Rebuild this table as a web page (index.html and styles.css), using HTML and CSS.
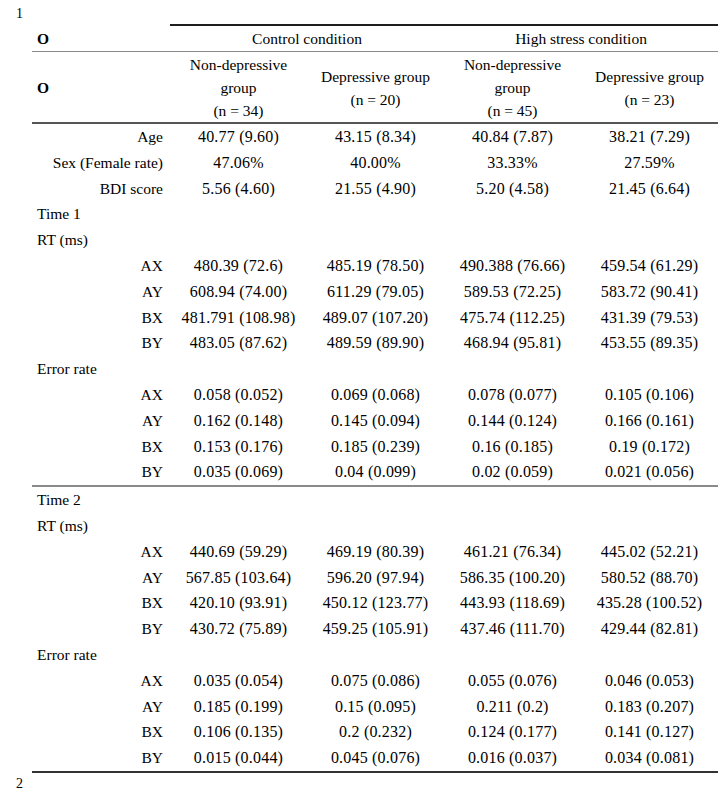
FILE: index.html
```html
<!DOCTYPE html>
<html>
<head>
<meta charset="utf-8">
<link rel="stylesheet" href="styles.css">
</head>
<body>
<div class="page">
  <div class="pnum top">1</div>
  <table class="tbl">
    <colgroup>
      <col class="c-label">
      <col class="c-data">
      <col class="c-data">
      <col class="c-data">
      <col class="c-data">
    </colgroup>
    <thead>
      <tr class="h1">
        <th class="lab bold">O</th>
        <th colspan="2" class="span">Control condition</th>
        <th colspan="2" class="span">High stress condition</th>
      </tr>
      <tr class="h2">
        <th class="lab bold">O</th>
        <th>Non-depressive<br>group<br>(n = 34)</th>
        <th>Depressive group<br>(n = 20)</th>
        <th>Non-depressive<br>group<br>(n = 45)</th>
        <th>Depressive group<br>(n = 23)</th>
      </tr>
    </thead>
    <tbody>
      <tr><td class="r">Age</td><td>40.77 (9.60)</td><td>43.15 (8.34)</td><td>40.84 (7.87)</td><td>38.21 (7.29)</td></tr>
      <tr><td class="r">Sex (Female rate)</td><td>47.06%</td><td>40.00%</td><td>33.33%</td><td>27.59%</td></tr>
      <tr><td class="r">BDI score</td><td>5.56 (4.60)</td><td>21.55 (4.90)</td><td>5.20 (4.58)</td><td>21.45 (6.64)</td></tr>
      <tr><td class="l">Time 1</td><td></td><td></td><td></td><td></td></tr>
      <tr><td class="l">RT (ms)</td><td></td><td></td><td></td><td></td></tr>
      <tr><td class="r">AX</td><td>480.39 (72.6)</td><td>485.19 (78.50)</td><td>490.388 (76.66)</td><td>459.54 (61.29)</td></tr>
      <tr><td class="r">AY</td><td>608.94 (74.00)</td><td>611.29 (79.05)</td><td>589.53 (72.25)</td><td>583.72 (90.41)</td></tr>
      <tr><td class="r">BX</td><td>481.791 (108.98)</td><td>489.07 (107.20)</td><td>475.74 (112.25)</td><td>431.39 (79.53)</td></tr>
      <tr><td class="r">BY</td><td>483.05 (87.62)</td><td>489.59 (89.90)</td><td>468.94 (95.81)</td><td>453.55 (89.35)</td></tr>
      <tr><td class="l">Error rate</td><td></td><td></td><td></td><td></td></tr>
      <tr><td class="r">AX</td><td>0.058 (0.052)</td><td>0.069 (0.068)</td><td>0.078 (0.077)</td><td>0.105 (0.106)</td></tr>
      <tr><td class="r">AY</td><td>0.162 (0.148)</td><td>0.145 (0.094)</td><td>0.144 (0.124)</td><td>0.166 (0.161)</td></tr>
      <tr><td class="r">BX</td><td>0.153 (0.176)</td><td>0.185 (0.239)</td><td>0.16 (0.185)</td><td>0.19 (0.172)</td></tr>
      <tr class="sep"><td class="r">BY</td><td>0.035 (0.069)</td><td>0.04 (0.099)</td><td>0.02 (0.059)</td><td>0.021 (0.056)</td></tr>
      <tr><td class="l">Time 2</td><td></td><td></td><td></td><td></td></tr>
      <tr><td class="l">RT (ms)</td><td></td><td></td><td></td><td></td></tr>
      <tr><td class="r">AX</td><td>440.69 (59.29)</td><td>469.19 (80.39)</td><td>461.21 (76.34)</td><td>445.02 (52.21)</td></tr>
      <tr><td class="r">AY</td><td>567.85 (103.64)</td><td>596.20 (97.94)</td><td>586.35 (100.20)</td><td>580.52 (88.70)</td></tr>
      <tr><td class="r">BX</td><td>420.10 (93.91)</td><td>450.12 (123.77)</td><td>443.93 (118.69)</td><td>435.28 (100.52)</td></tr>
      <tr><td class="r">BY</td><td>430.72 (75.89)</td><td>459.25 (105.91)</td><td>437.46 (111.70)</td><td>429.44 (82.81)</td></tr>
      <tr><td class="l">Error rate</td><td></td><td></td><td></td><td></td></tr>
      <tr><td class="r">AX</td><td>0.035 (0.054)</td><td>0.075 (0.086)</td><td>0.055 (0.076)</td><td>0.046 (0.053)</td></tr>
      <tr><td class="r">AY</td><td>0.185 (0.199)</td><td>0.15 (0.095)</td><td>0.211 (0.2)</td><td>0.183 (0.207)</td></tr>
      <tr><td class="r">BX</td><td>0.106 (0.135)</td><td>0.2 (0.232)</td><td>0.124 (0.177)</td><td>0.141 (0.127)</td></tr>
      <tr class="last"><td class="r">BY</td><td>0.015 (0.044)</td><td>0.045 (0.076)</td><td>0.016 (0.037)</td><td>0.034 (0.081)</td></tr>
    </tbody>
  </table>
  <div class="pnum bottom">2</div>
</div>
</body>
</html>
```

FILE: styles.css
```css
html, body {
  margin: 0;
  padding: 0;
  background: #ffffff;
}

body {
  font-family: "Liberation Serif", "Times New Roman", serif;
  font-size: 15.5px;
  color: #000000;
}

.page {
  width: 722px;
  height: 790px;
  overflow: hidden;
}

.pnum {
  font-size: 14px;
  padding-left: 16px;
}

.pnum.top {
  height: 24px;
  line-height: 28px;
}

.pnum.bottom {
  line-height: 22px;
}

.tbl {
  margin-left: 32px;
  width: 686px;
  table-layout: fixed;
  border-collapse: separate;
  border-spacing: 0;
}

.c-label { width: 138px; }
.c-data { width: 137px; }

.tbl th,
.tbl td {
  padding: 0;
  font-weight: normal;
  text-align: center;
  vertical-align: middle;
  white-space: nowrap;
}

.tbl .bold {
  font-weight: bold;
}

.tbl .lab {
  text-align: left;
  padding-left: 5px;
}

.h1 th {
  line-height: 25px;
  border-top: 2px solid transparent;
  border-bottom: 1px solid #8a8a8a;
}

.h1 th.span {
  border-top: 2px solid #1e1e1e;
}

.h2 th {
  line-height: 23px;
  padding-top: 1px;
  border-bottom: 2px solid #555555;
}

.tbl td {
  line-height: 25.8px;
  font-size: 16px;
  letter-spacing: 0.2px;
}

.tbl td.r,
.tbl td.l {
  font-size: 15.5px;
  letter-spacing: 0;
}

.tbl td.r {
  text-align: right;
  padding-right: 7px;
}

.tbl td.l {
  text-align: left;
  padding-left: 5px;
}

.sep td {
  border-bottom: 2px solid #8a8a8a;
}

.last td {
  border-bottom: 2px solid #333333;
}
```
